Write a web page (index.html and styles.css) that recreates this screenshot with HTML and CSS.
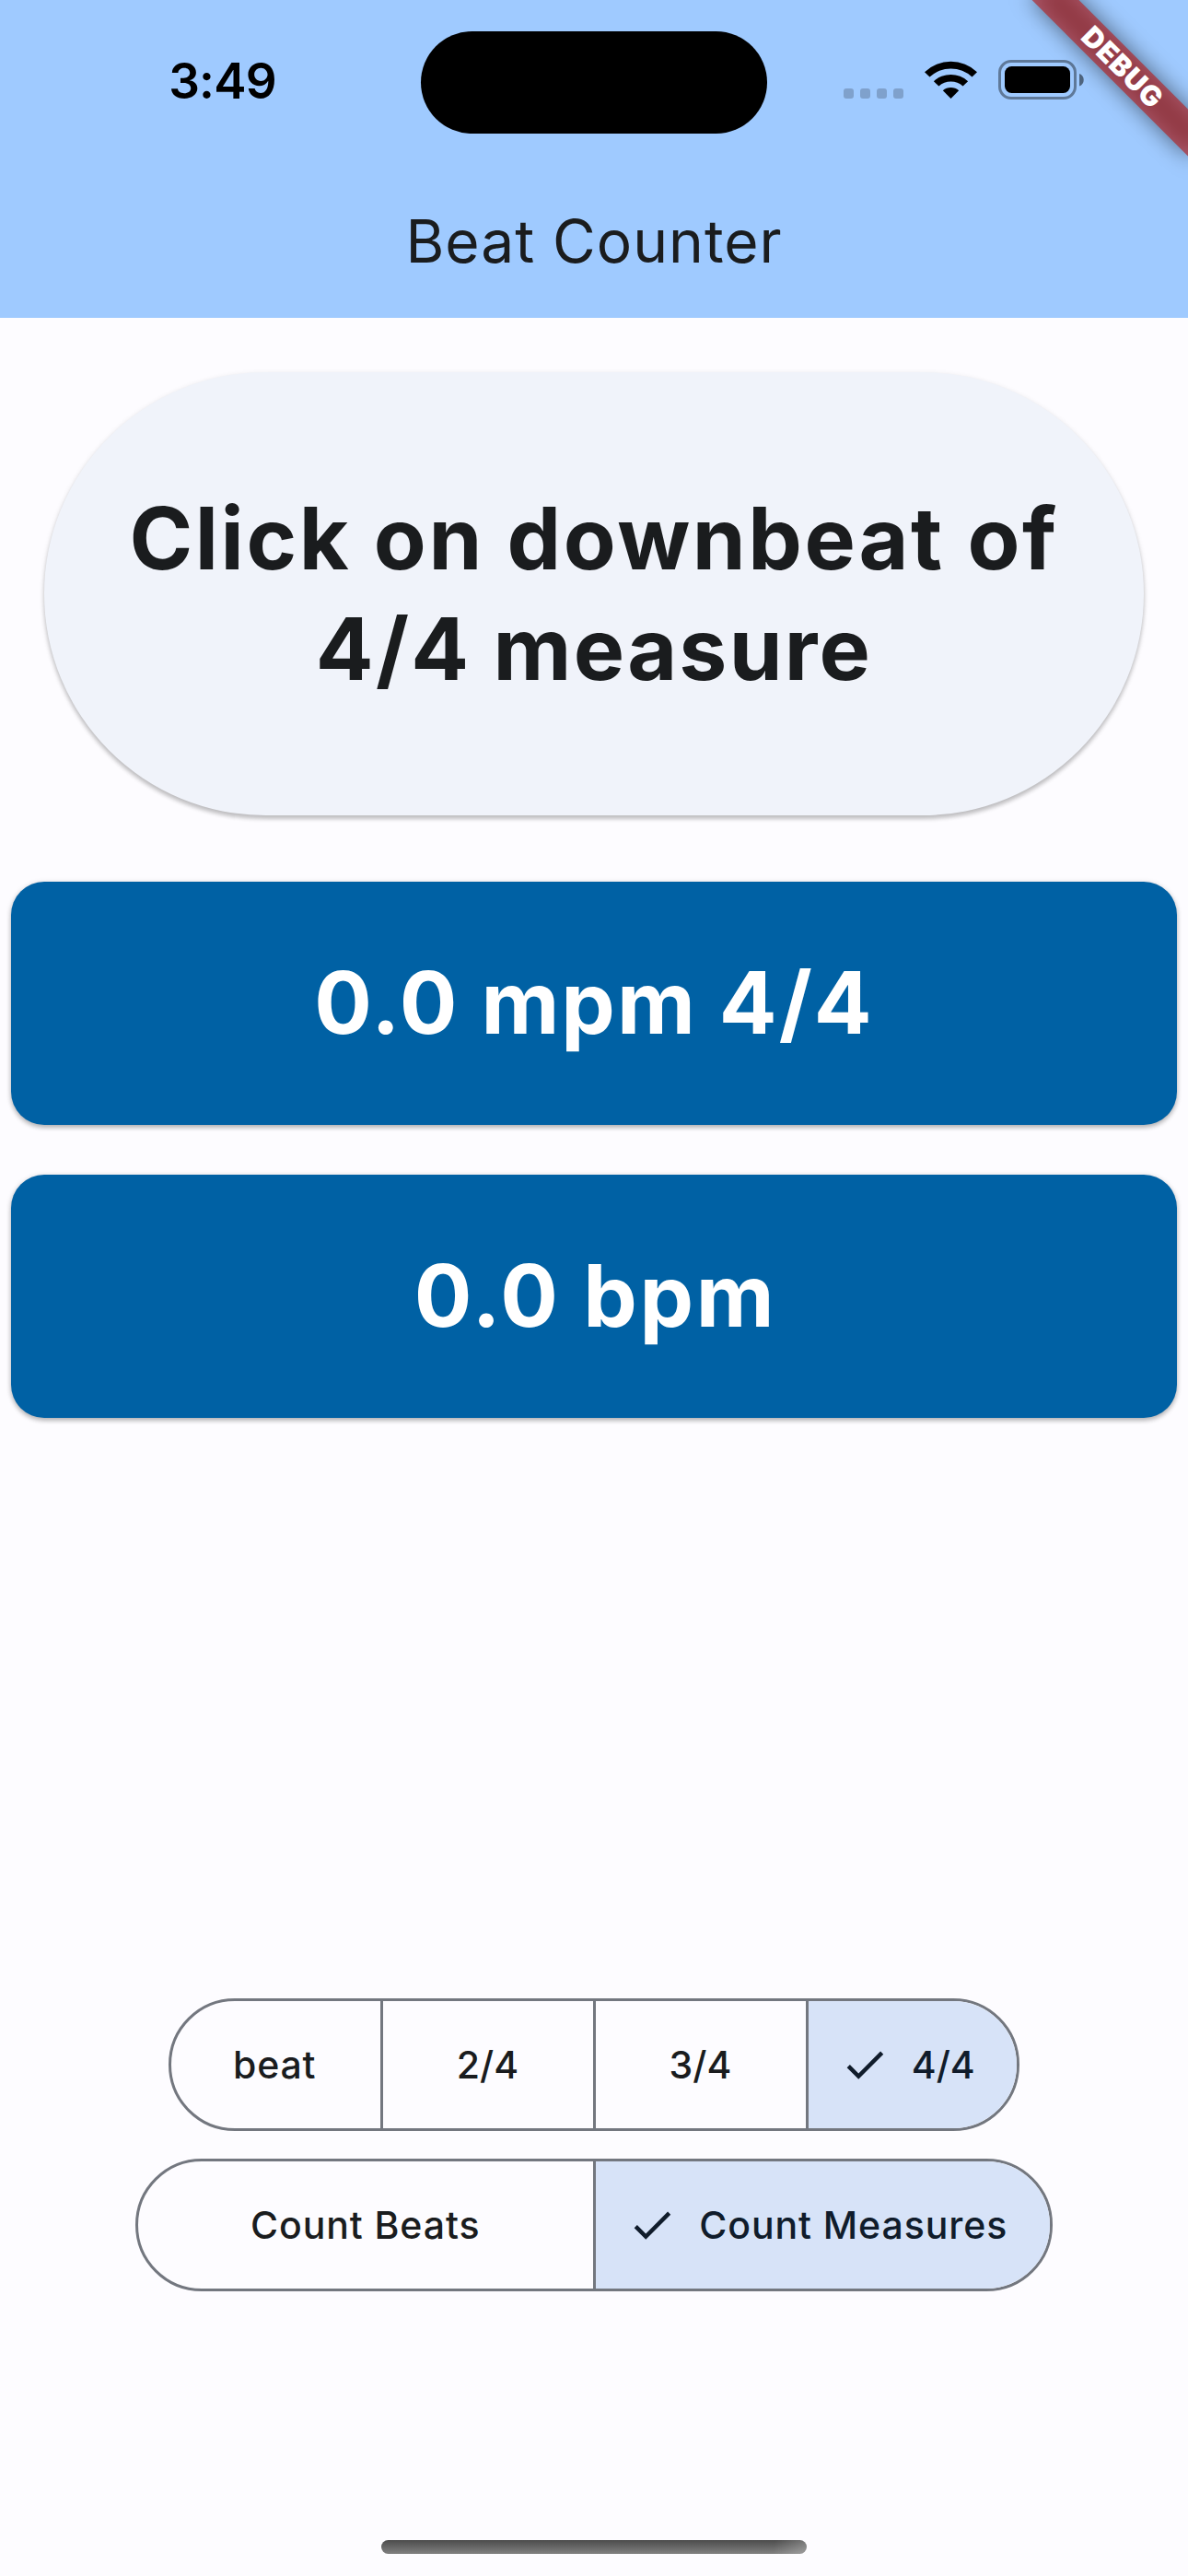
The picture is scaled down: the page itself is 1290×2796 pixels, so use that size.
FILE: index.html
```html
<!DOCTYPE html>
<html lang="en">
<head>
<meta charset="utf-8">
<title>Beat Counter</title>
<link rel="stylesheet" href="styles.css">
</head>
<body>
<div class="app">
  <header class="app-bar">
    <div class="status-bar">
      <div class="status-side status-left"><span class="clock">3:49</span></div>
      <div class="island"></div>
      <div class="status-side status-right">
        <div class="signal"><i></i><i></i><i></i><i></i></div>
        <svg class="wifi" viewBox="0 0 57 42">
          <path d="M0 13.200A41.500 41.500 0 0 1 57 13.200L51.500 18.600A33.500 33.500 0 0 0 5.500 18.600Z"/>
          <path d="M9.900 23.200A27.600 27.600 0 0 1 47.100 23.200L41.600 28.600A19.600 19.600 0 0 0 15.400 28.600Z"/>
          <path d="M19.800 33.300A13.400 13.400 0 0 1 37.200 33.300L28.500 42Z"/>
        </svg>
        <svg class="battery" viewBox="0 0 93 43">
          <rect x="1.500" y="1.500" width="82" height="40" rx="12.500" fill="none" stroke="#000" stroke-opacity=".4" stroke-width="3"/>
          <rect x="7" y="7" width="71" height="29" rx="7.500"/>
          <path d="M88 15C94.300 17 94.300 26.500 88 28.500Z" fill-opacity=".5"/>
        </svg>
      </div>
    </div>
    <h1 class="title">Beat Counter</h1>
    <div class="debug-banner"><span>DEBUG</span></div>
  </header>
  <main class="content">
    <button class="tap-button"><span class="action">Click on downbeat of</span><span class="target">4/4 measure</span></button>
    <section class="card measures">0.0 mpm 4/4</section>
    <section class="card beats">0.0 bpm</section>
  </main>
  <footer class="controls">
    <div class="segmented meter">
      <button>beat</button>
      <button>2/4</button>
      <button>3/4</button>
      <button class="selected"><svg class="check" viewBox="0 0 24 24"><path d="M9 16.170L4.830 12l-1.420 1.410L9 19 21 7l-1.410-1.410z"/></svg><span>4/4</span></button>
    </div>
    <div class="segmented mode">
      <button>Count Beats</button>
      <button class="selected"><svg class="check" viewBox="0 0 24 24"><path d="M9 16.170L4.830 12l-1.420 1.410L9 19 21 7l-1.410-1.410z"/></svg><span>Count Measures</span></button>
    </div>
    <div class="home-indicator"></div>
  </footer>
</div>
</body>
</html>
```

FILE: styles.css
```css
* {
  box-sizing: border-box;
}

body {
  margin: 0;
  font-family: Inter, "Liberation Sans", sans-serif;
  color: #1a1c1e;
  background: #fdfcff;
}

button {
  margin: 0;
  border: 0;
  padding: 0;
  font: inherit;
  letter-spacing: inherit;
  color: inherit;
  background: none;
}

.app {
  display: flex;
  flex-direction: column;
  width: 1290px;
  height: 2796px;
  overflow: hidden;
}

/* App bar with the system status row */
.app-bar {
  position: relative;
  display: flex;
  flex-direction: column;
  height: 345px;
  overflow: hidden;
  background: #9fcaff;
}

.status-bar {
  display: flex;
  flex: none;
  align-items: center;
  height: 178px;
}

.status-side {
  display: flex;
  flex: none;
  align-items: center;
  width: 457px;
}

.status-left {
  justify-content: center;
  padding: 0 0 2px 26px;
}

.clock {
  font-size: 53px;
  font-weight: 600;
  line-height: 60px;
  letter-spacing: -0.8px;
  color: #000;
}

.island {
  width: 376px;
  height: 111px;
  border-radius: 56px;
  background: #000;
}

.status-right {
  align-items: flex-end;
  height: 43px;
  padding-left: 83px;
  margin-bottom: 5px;
}

.signal {
  display: flex;
  gap: 7px;
  margin: 0 23px 1px 0;
}

.signal i {
  width: 11px;
  height: 11px;
  border-radius: 3px;
  background: rgba(0, 0, 0, 0.2);
}

.wifi {
  width: 57px;
  height: 42px;
  margin: 0 23px 1px 0;
}

.battery {
  width: 93px;
  height: 43px;
}

.title {
  flex: none;
  margin: 0;
  font-size: 64px;
  font-weight: 400;
  line-height: 168px;
  letter-spacing: 1px;
  text-align: center;
}

/* Diagonal ribbon across the top right corner */
.debug-banner {
  position: absolute;
  top: 54px;
  left: 1098px;
  display: flex;
  align-items: center;
  justify-content: center;
  width: 240px;
  height: 36px;
  padding-left: 3px;
  transform: rotate(45deg);
}

.debug-banner::before,
.debug-banner::after {
  content: "";
  position: absolute;
  inset: 0;
}

.debug-banner::before {
  background: rgba(0, 0, 0, 0.5);
  filter: blur(12px);
}

.debug-banner::after {
  background: rgba(183, 28, 28, 0.627);
}

.debug-banner span {
  z-index: 1;
  font-size: 30.600px;
  font-weight: 900;
  line-height: 36px;
  letter-spacing: 0.8px;
  color: #fff;
}

/* Tap area and readouts */
.content {
  display: flex;
  flex: 1;
  flex-direction: column;
  padding: 59px 12px 0;
}

.tap-button {
  display: flex;
  flex-direction: column;
  align-items: center;
  justify-content: center;
  height: 481px;
  margin: 0 36px 72px;
  border-radius: 241px;
  padding-bottom: 2px;
  font-size: 93px;
  font-weight: 700;
  line-height: 120px;
  background: #f0f3fa;
  box-shadow: 0 4px 4px rgba(0, 0, 0, 0.18), 0 2px 6px rgba(0, 0, 0, 0.12);
}

.action {
  letter-spacing: 2.6px;
}

.target {
  letter-spacing: 2.2px;
}

.card {
  display: flex;
  align-items: center;
  justify-content: center;
  height: 264px;
  margin-bottom: 54px;
  border-radius: 36px;
  padding-bottom: 3px;
  font-size: 93px;
  font-weight: 700;
  color: #fff;
  background: #0061a4;
  box-shadow: 0 3px 5px rgba(0, 0, 0, 0.22), 0 1px 6px rgba(0, 0, 0, 0.14);
}

.measures {
  letter-spacing: 2px;
}

.beats {
  padding-left: 3px;
  letter-spacing: 2.6px;
}

/* Segmented selectors */
.controls {
  display: flex;
  flex-direction: column;
  align-items: center;
  height: 627px;
}

.segmented {
  display: grid;
  height: 144px;
  margin-bottom: 30px;
  border: 3px solid #73777f;
  border-radius: 72px;
  overflow: hidden;
  font-size: 41px;
  font-weight: 500;
}

.meter {
  grid-template-columns: 226.500px 231px 231px 1fr;
  width: 924px;
}

.mode {
  grid-template-columns: 493.500px 1fr;
  width: 996px;
  letter-spacing: 0.9px;
}

.segmented button {
  display: flex;
  align-items: center;
  justify-content: center;
}

.meter button:first-child {
  padding-right: 2px;
  letter-spacing: 0.8px;
}

.segmented button + button {
  border-left: 3px solid #73777f;
}

.segmented .selected {
  gap: 24px;
  padding-right: 11px;
  color: #101c2b;
  background: #d7e3f8;
}

.check {
  width: 54px;
  height: 54px;
  fill: currentColor;
}

.home-indicator {
  width: 462px;
  height: 15px;
  margin-top: 240px;
  border-radius: 8px;
  background:
    linear-gradient(100deg, transparent 92%, rgba(255, 255, 255, 0.25)),
    linear-gradient(#4c4c4c, #808080);
}
```
